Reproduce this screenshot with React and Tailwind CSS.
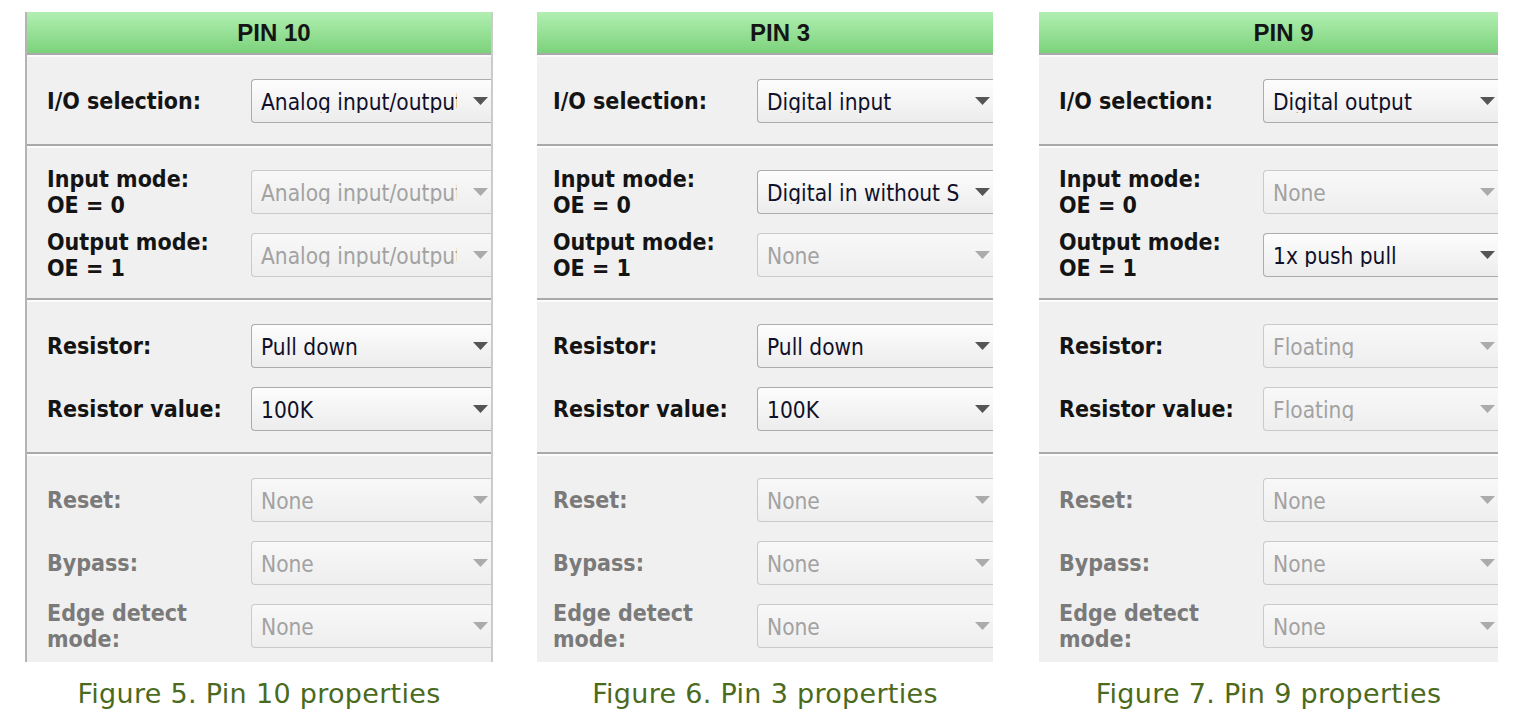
import React from 'react';

// pin property panels, as captured from the configurator
const panels = [
  {
    title: 'PIN 10',
    caption: 'Figure 5. Pin 10 properties',
    framed: true,
    pad: 'pl-[20px]',
    box: 'w-[468px]',
    io: { value: 'Analog input/output', on: true },
    input: { value: 'Analog input/output', on: false },
    output: { value: 'Analog input/output', on: false },
    resistor: { value: 'Pull down', on: true },
    resistorValue: { value: '100K', on: true },
  },
  {
    title: 'PIN 3',
    caption: 'Figure 6. Pin 3 properties',
    framed: false,
    pad: 'pl-[16px]',
    box: 'w-[456px] ml-[44px]',
    io: { value: 'Digital input', on: true },
    input: { value: 'Digital in without Schmitt trigger', on: true },
    output: { value: 'None', on: false },
    resistor: { value: 'Pull down', on: true },
    resistorValue: { value: '100K', on: true },
  },
  {
    title: 'PIN 9',
    caption: 'Figure 7. Pin 9 properties',
    framed: false,
    pad: 'pl-[20px]',
    box: 'w-[459px] ml-[46px]',
    io: { value: 'Digital output', on: true },
    input: { value: 'None', on: false },
    output: { value: '1x push pull', on: true },
    resistor: { value: 'Floating', on: false },
    resistorValue: { value: 'Floating', on: false },
  },
];

const Separator = () => (
  <div>
    <div className="h-[2px] bg-[#a9a9a9]"></div>
    <div className="h-[2px] bg-[#fbfbfb]"></div>
  </div>
);

const Select = ({ value, on }) => (
  <div
    className={`flex-1 min-w-0 h-[44px] flex items-center rounded-l-[4px] border border-r-0 ${
      on
        ? 'border-[#acacac] bg-linear-to-b from-[#fdfdfd] to-[#ececec] text-[#10102a]'
        : 'border-[#cacaca] bg-linear-to-b from-[#f8f8f8] to-[#eeeeee] text-[#a2a2a2]'
    }`}
  >
    <span className="flex-1 min-w-0 overflow-hidden whitespace-nowrap pl-[9px] pt-[2px] text-[22.5px] leading-none font-['DejaVu_Sans_Condensed','DejaVu_Sans',sans-serif] font-stretch-condensed">
      {value}
    </span>
    <span className="w-[34px] shrink-0 flex justify-end pr-[3px]">
      <svg width="15" height="8" viewBox="0 0 15 8">
        <path d="M0 0 H15 L7.5 8 Z" fill={on ? '#555555' : '#ababab'} />
      </svg>
    </span>
  </div>
);

const Row = ({ label, field, muted }) => (
  <div className="flex items-center h-[44px]">
    <div
      className={`w-[204px] shrink-0 h-[44px] flex flex-col justify-center whitespace-nowrap text-[23px] leading-[26px] font-bold font-['DejaVu_Sans_Condensed','DejaVu_Sans',sans-serif] font-stretch-condensed ${
        muted ? 'text-[#7a7a7a]' : 'text-[#141414]'
      }`}
    >
      {label}
    </div>
    <Select {...field} />
  </div>
);

const Group = ({ pad, children }) => (
  <div className={`flex flex-col gap-[19px] pt-[22px] pb-[21px] ${pad}`}>{children}</div>
);

const none = { value: 'None', on: false };

const Panel = ({ p }) => (
  <div className={`${p.box} shrink-0 flex flex-col items-center`}>
    <div
      className={`w-full h-[650px] overflow-hidden bg-[#f0f0f0] ${
        p.framed ? 'border-l-2 border-r-2 border-l-[#b4b4b4] border-r-[#cbcbcb]' : ''
      }`}
    >
      <div className="h-[41px] flex items-center justify-center pl-[30px] bg-linear-to-b from-[#b2efb2] to-[#7bd27b] text-[24px] font-bold text-[#151515] font-['Liberation_Sans',sans-serif]">
        {p.title}
      </div>
      <Separator />
      <Group pad={p.pad}>
        <Row label="I/O selection:" field={p.io} />
      </Group>
      <Separator />
      <Group pad={p.pad}>
        <Row label={<><span>Input mode:</span><span>OE = 0</span></>} field={p.input} />
        <Row label={<><span>Output mode:</span><span>OE = 1</span></>} field={p.output} />
      </Group>
      <Separator />
      <Group pad={p.pad}>
        <Row label="Resistor:" field={p.resistor} />
        <Row label="Resistor value:" field={p.resistorValue} />
      </Group>
      <Separator />
      <Group pad={p.pad}>
        <Row label="Reset:" field={none} muted />
        <Row label="Bypass:" field={none} muted />
        <Row label={<><span>Edge detect</span><span>mode:</span></>} field={none} muted />
      </Group>
    </div>
    <p className="mt-[16px] text-[27px] leading-[31px] tracking-[0.3px] text-[#4b6a1e] font-['DejaVu_Sans',sans-serif]">
      {p.caption}
    </p>
  </div>
);

export default function App() {
  return (
    <div className="w-[1524px] h-[723px] bg-white pt-[12px] pl-[25px] flex">
      {panels.map((p) => (
        <Panel key={p.title} p={p} />
      ))}
    </div>
  );
}
